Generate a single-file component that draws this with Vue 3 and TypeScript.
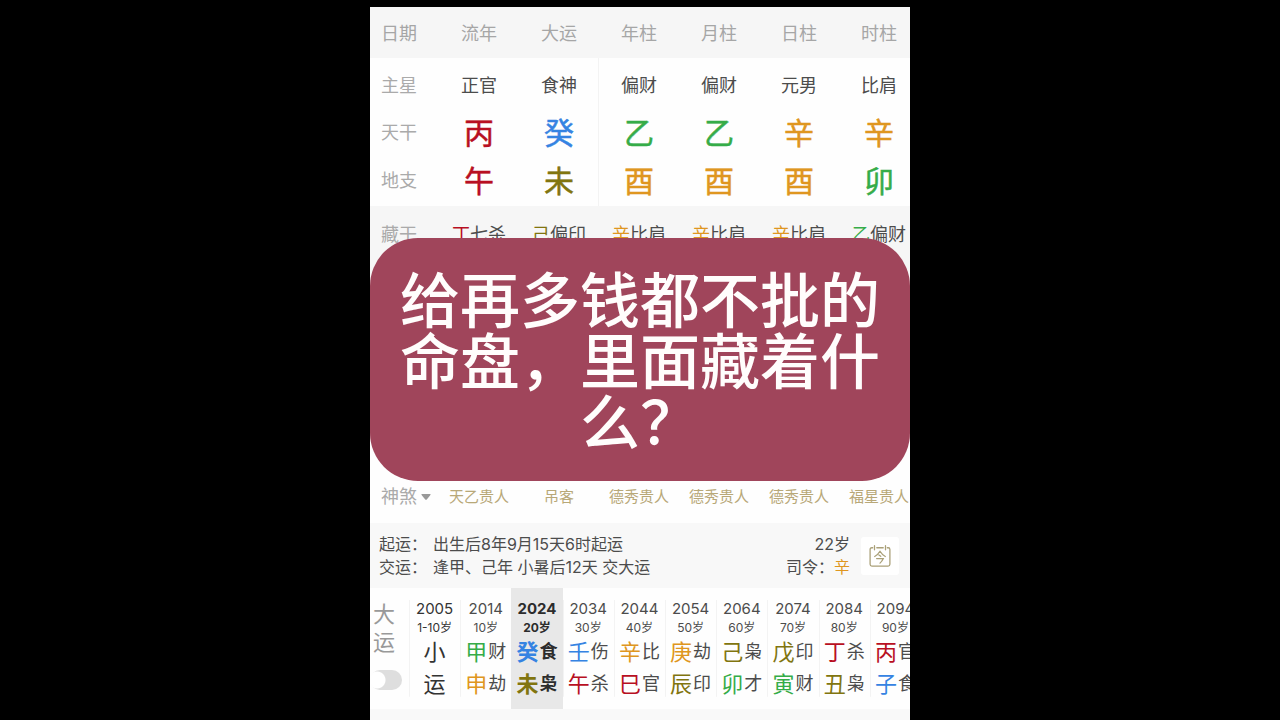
<script setup lang="ts">
import { ref } from 'vue'

type Tone = 'red' | 'blue' | 'green' | 'gold' | 'olive'

interface Pillar {
  name: string
  star: string
  stem: string
  stemTone: Tone
  branch: string
  branchTone: Tone
  hidden: string
  hiddenTone: Tone
  hiddenStar: string
  omen: string
}

interface Cycle {
  year: string
  age: string
  top: string
  topTone?: Tone
  topStar?: string
  bottom: string
  bottomTone?: Tone
  bottomStar?: string
}

const pillars: Pillar[] = [
  { name: '流年', star: '正官', stem: '丙', stemTone: 'red', branch: '午', branchTone: 'red', hidden: '丁', hiddenTone: 'red', hiddenStar: '七杀', omen: '天乙贵人' },
  { name: '大运', star: '食神', stem: '癸', stemTone: 'blue', branch: '未', branchTone: 'olive', hidden: '己', hiddenTone: 'olive', hiddenStar: '偏印', omen: '吊客' },
  { name: '年柱', star: '偏财', stem: '乙', stemTone: 'green', branch: '酉', branchTone: 'gold', hidden: '辛', hiddenTone: 'gold', hiddenStar: '比肩', omen: '德秀贵人' },
  { name: '月柱', star: '偏财', stem: '乙', stemTone: 'green', branch: '酉', branchTone: 'gold', hidden: '辛', hiddenTone: 'gold', hiddenStar: '比肩', omen: '德秀贵人' },
  { name: '日柱', star: '元男', stem: '辛', stemTone: 'gold', branch: '酉', branchTone: 'gold', hidden: '辛', hiddenTone: 'gold', hiddenStar: '比肩', omen: '德秀贵人' },
  { name: '时柱', star: '比肩', stem: '辛', stemTone: 'gold', branch: '卯', branchTone: 'green', hidden: '乙', hiddenTone: 'green', hiddenStar: '偏财', omen: '福星贵人' },
]

const cycles: Cycle[] = [
  { year: '2005', age: '1-10岁', top: '小', bottom: '运' },
  { year: '2014', age: '10岁', top: '甲', topTone: 'green', topStar: '财', bottom: '申', bottomTone: 'gold', bottomStar: '劫' },
  { year: '2024', age: '20岁', top: '癸', topTone: 'blue', topStar: '食', bottom: '未', bottomTone: 'olive', bottomStar: '枭' },
  { year: '2034', age: '30岁', top: '壬', topTone: 'blue', topStar: '伤', bottom: '午', bottomTone: 'red', bottomStar: '杀' },
  { year: '2044', age: '40岁', top: '辛', topTone: 'gold', topStar: '比', bottom: '巳', bottomTone: 'red', bottomStar: '官' },
  { year: '2054', age: '50岁', top: '庚', topTone: 'gold', topStar: '劫', bottom: '辰', bottomTone: 'olive', bottomStar: '印' },
  { year: '2064', age: '60岁', top: '己', topTone: 'olive', topStar: '枭', bottom: '卯', bottomTone: 'green', bottomStar: '才' },
  { year: '2074', age: '70岁', top: '戊', topTone: 'olive', topStar: '印', bottom: '寅', bottomTone: 'green', bottomStar: '财' },
  { year: '2084', age: '80岁', top: '丁', topTone: 'red', topStar: '杀', bottom: '丑', bottomTone: 'olive', bottomStar: '枭' },
  { year: '2094', age: '90岁', top: '丙', topTone: 'red', topStar: '官', bottom: '子', bottomTone: 'blue', bottomStar: '食' },
]

const selected = ref('2024')
const showMinor = ref(false)
</script>

<template>
  <div class="stage">
    <main class="sheet">
      <table class="chart">
        <thead>
          <tr class="row-head">
            <th scope="col" class="label">日期</th>
            <th v-for="p in pillars" :key="p.name" scope="col">{{ p.name }}</th>
          </tr>
        </thead>
        <tbody>
          <tr class="row-star">
            <th scope="row" class="label">主星</th>
            <td v-for="p in pillars" :key="p.name">{{ p.star }}</td>
          </tr>
          <tr class="row-glyph">
            <th scope="row" class="label">天干</th>
            <td v-for="p in pillars" :key="p.name" :class="p.stemTone">{{ p.stem }}</td>
          </tr>
          <tr class="row-glyph">
            <th scope="row" class="label">地支</th>
            <td v-for="p in pillars" :key="p.name" :class="p.branchTone">{{ p.branch }}</td>
          </tr>
          <tr class="row-hidden">
            <th scope="row" class="label">藏干</th>
            <td v-for="p in pillars" :key="p.name"><span :class="p.hiddenTone">{{ p.hidden }}</span>{{ p.hiddenStar }}</td>
          </tr>
          <tr class="row-omen">
            <th scope="row" class="label">
              <button type="button" class="omen-toggle">神煞<svg width="10" height="6" viewBox="0 0 10 6" aria-hidden="true"><path d="M1 0h8q1 0 .4.9L6 5.2q-1 1-2 0L.6.9Q0 0 1 0z" fill="#999" /></svg></button>
            </th>
            <td v-for="p in pillars" :key="p.name">{{ p.omen }}</td>
          </tr>
        </tbody>
      </table>

      <section class="info">
        <dl class="facts">
          <dt>起运：</dt>
          <dd>出生后8年9月15天6时起运</dd>
          <dt>交运：</dt>
          <dd>逢甲、己年 小暑后12天 交大运</dd>
        </dl>
        <p class="side">22岁<br />司令：<span class="gold">辛</span></p>
        <button type="button" class="today" aria-label="今">
          <svg width="22" height="24" viewBox="0 0 24 26" fill="none" stroke="#aaa078" stroke-width="1.4" stroke-linecap="round" aria-hidden="true">
            <path d="M4 4H3Q1.200 4 1.200 6V22Q1.200 24 3.200 24H20.800Q22.800 24 22.800 22V6Q22.800 4 21 4H20M8.500 4H15.500M6 1.800V6.200M18 1.800V6.200" />
            <path d="M12 7.800Q9.800 11.500 6.200 13.500M12 7.800Q14.200 11.500 17.800 13.500M10.800 11.800L12.800 13.300M8.300 15.800H15.600Q14.500 18.500 12 20.800" />
          </svg>
        </button>
      </section>

      <section class="luck">
        <div class="luck-label">
          <label for="minor">大<br />运</label>
          <input id="minor" v-model="showMinor" type="checkbox" class="switch" />
        </div>
        <button
          v-for="c in cycles"
          :key="c.year"
          type="button"
          class="cycle"
          :class="{ active: c.year === selected, plain: !c.topStar }"
          @click="selected = c.year"
        >
          <span class="year">{{ c.year }}</span>
          <span class="age">{{ c.age }}</span>
          <span class="pair"><b :class="c.topTone">{{ c.top }}</b><i v-if="c.topStar">{{ c.topStar }}</i></span>
          <span class="pair"><b :class="c.bottomTone">{{ c.bottom }}</b><i v-if="c.bottomStar">{{ c.bottomStar }}</i></span>
        </button>
      </section>
      <div class="tail"></div>

      <h1 class="banner">给再多钱都不批的命盘，里面藏着什么？</h1>
    </main>
  </div>
</template>

<style>
body {
  margin: 0;
  background: #000;
}
</style>

<style scoped>
.stage {
  height: 100vh;
  overflow: hidden;
  background: #000;
  font-family: Inter, 'Noto Sans CJK SC', sans-serif;
  color: #4c4c4c;
}

.sheet {
  position: relative;
  box-sizing: border-box;
  max-width: 540px;
  min-height: 100%;
  margin: 0 auto;
  border-top: 7px solid #000;
  background: #fefefe;
  overflow: hidden;
}

.red { color: #b80f22; }
.blue { color: #3583e2; }
.green { color: #35ac48; }
.gold { color: #df9620; }
.olive { color: #81750f; }

.chart {
  width: 549px;
  table-layout: fixed;
  border-collapse: collapse;
  font-size: 18px;
  line-height: 24px;
}

.chart th,
.chart td {
  padding: 0;
  text-align: center;
  font-weight: 400;
  white-space: nowrap;
}

.chart .label {
  width: 58px;
  padding-left: 11px;
  text-align: left;
  font-size: 18px;
  color: #aaa;
}

.row-head {
  height: 51px;
  background: #f6f6f6;
}

.chart .row-head th {
  padding-top: 3px;
  color: #a6a6a6;
}

.row-star { height: 52px; }

.chart .row-star th,
.chart .row-star td {
  padding-top: 3px;
}

.row-glyph { height: 48px; }

.chart .row-glyph th,
.chart .row-glyph td {
  padding-bottom: 2px;
}

.row-glyph td {
  font-size: 30px;
  line-height: 40px;
  -webkit-text-stroke: 0.5px currentColor;
}

.row-star td:nth-child(3),
.row-glyph td:nth-child(3) {
  background: linear-gradient(#f3f3f3, #f3f3f3) right / 1px 100% no-repeat;
}

.row-hidden {
  height: 153px;
  background: #f6f6f6;
}

.chart .row-hidden th,
.chart .row-hidden td {
  padding-top: 17px;
  vertical-align: top;
}

.row-omen { height: 164px; }

.chart .row-omen th,
.chart .row-omen td {
  padding-bottom: 14px;
  vertical-align: bottom;
}

.row-omen td {
  font-size: 15px;
  color: #b8a878;
}

.omen-toggle {
  display: flex;
  align-items: center;
  gap: 4px;
  padding: 0;
  border: 0;
  background: none;
  font: inherit;
  color: inherit;
}

.info {
  display: flex;
  align-items: center;
  padding: 10px 11px 9px 9px;
  background: #f8f8f8;
  font-size: 16px;
  line-height: 23px;
}

.facts {
  display: grid;
  grid-template-columns: 54px auto;
  flex: 1;
  margin: 0;
}

.facts dd { margin: 0; }

.side {
  margin: 0 11px 0 0;
  text-align: right;
}

.today {
  display: flex;
  align-items: center;
  justify-content: center;
  width: 38px;
  height: 38px;
  padding: 0;
  border: 0;
  border-radius: 3px;
  background: #fff;
}

.luck {
  display: grid;
  grid-template-columns: 39px repeat(10, 1fr);
  width: 551px;
}

.luck-label {
  display: flex;
  flex-direction: column;
  align-items: flex-start;
  padding-top: 12px;
  font-size: 22px;
  line-height: 28px;
  color: #999;
}

.luck-label label { padding-left: 3px; }

.switch {
  appearance: none;
  width: 32px;
  height: 20px;
  margin: 14px 0 0;
  border-radius: 10px;
  background: radial-gradient(circle at 7px 10px, #fff 8px, transparent 9px) #dedede;
}

.switch:checked {
  background: radial-gradient(circle at 24px 10px, #fff 7px, transparent 8px) #b8a878;
}

.cycle {
  display: flex;
  flex-direction: column;
  align-items: center;
  padding: 11px 0 9px;
  border: 0;
  background: linear-gradient(#f3f3f3, #f3f3f3) left / 1px 80% no-repeat;
  font: inherit;
  color: #4c4c4c;
  white-space: nowrap;
}

.cycle.active {
  background: #e8e8e8;
  color: #2c2c2c;
}

.year {
  font-size: 15px;
  line-height: 20px;
}

.age {
  font-size: 12px;
  line-height: 17px;
}

.active .year,
.active .age {
  font-weight: 700;
}

.pair {
  display: flex;
  align-items: center;
  gap: 1px;
  font-size: 22px;
  line-height: 32px;
}

.pair b {
  font-weight: 400;
}

.pair i {
  font-size: 18px;
  font-style: normal;
}

.active .pair b,
.active .pair i {
  font-weight: 700;
}

.plain .year,
.plain .age,
.plain .pair b { color: #333; }

.tail {
  height: 12px;
  background: #f9f9f9;
}

.banner {
  position: absolute;
  top: 231px;
  left: 0;
  right: 0;
  margin: 0;
  padding: 28px 30px 32px;
  border-radius: 48px;
  background: #a0455b;
  color: #fffdfc;
  font-family: 'Noto Sans CJK SC', sans-serif;
  font-size: 60px;
  font-weight: 500;
  line-height: 61px;
  text-align: center;
}
</style>
